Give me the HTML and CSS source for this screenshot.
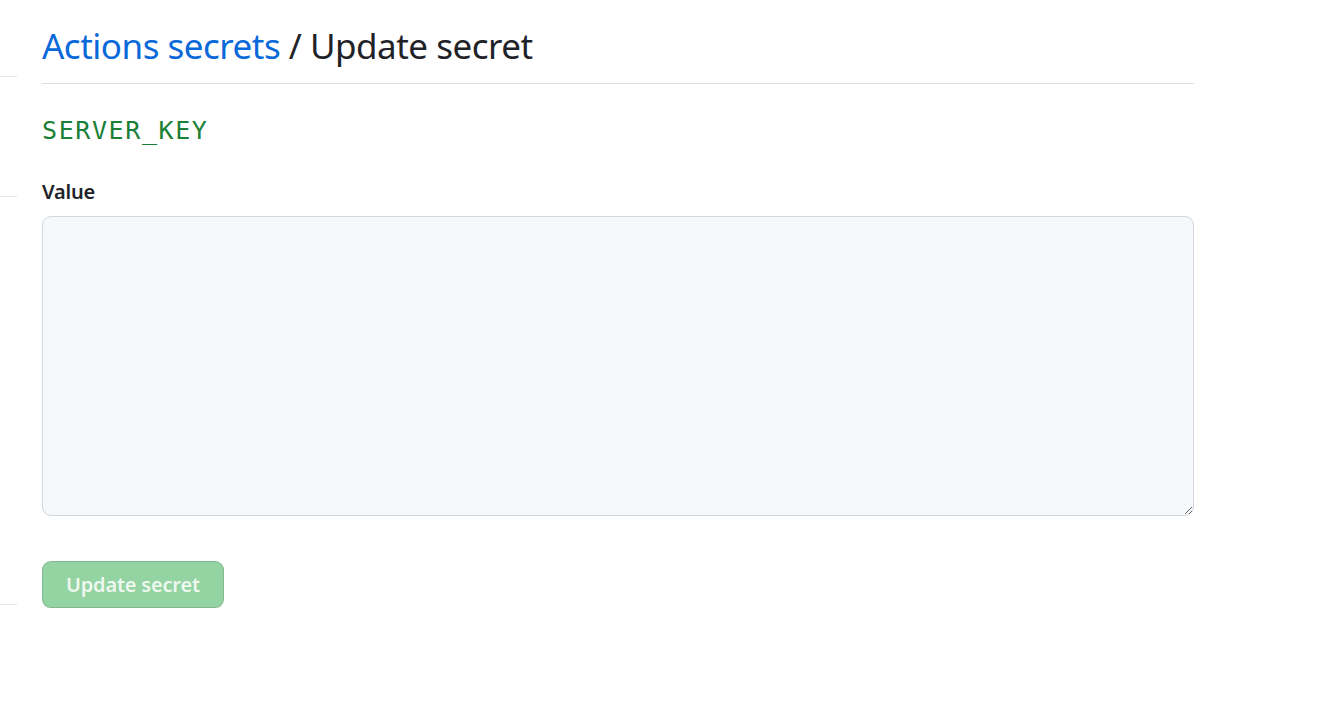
FILE: index.html
```html
<!DOCTYPE html>
<html lang="en">
<head>
<meta charset="utf-8">
<title>Update secret</title>
<link rel="stylesheet" href="styles.css">
</head>
<body>
<div class="layout">
  <nav class="sidebar">
    <div class="side-item side-a"></div>
    <div class="side-item side-b"></div>
    <div class="side-item side-c"></div>
  </nav>
  <main class="main">
    <div class="subhead">
      <h2 class="subhead-heading"><a class="crumb" href="#">Actions secrets</a> / Update secret</h2>
    </div>
    <h3 class="secret-name">SERVER_KEY</h3>
    <form class="form">
      <label class="label" for="secret_value">Value</label>
      <textarea class="textarea" id="secret_value"></textarea>
      <button type="button" class="btn-primary" disabled>Update secret</button>
    </form>
  </main>
</div>
</body>
</html>
```
FILE: styles.css
```css
* { box-sizing: border-box; }
html, body { margin: 0; padding: 0; background: #ffffff; }
body {
  font-family: "Noto Sans", "Open Sans", sans-serif;
  color: #1f2328;
}
.layout {
  display: flex;
  align-items: flex-start;
}
.sidebar {
  width: 17px;
  flex: none;
  display: flex;
  flex-direction: column;
}
.side-item { border-bottom: 1px solid #e6e9ec; }
.side-a { height: 77px; }
.side-b { height: 120px; }
.side-c { height: 408px; }
.main {
  width: 1152px;
  margin-left: 25px;
  flex: none;
}
.subhead {
  padding-top: 23px;
  padding-bottom: 15px;
  border-bottom: 1px solid #d8dee4;
}
.subhead-heading {
  margin: 0;
  font-size: 35px;
  line-height: 45px;
  font-weight: 400;
  letter-spacing: -0.5px;
  color: #1f2328;
}
.crumb { color: #0969da; text-decoration: none; }
.secret-name {
  margin: 32px 0 0;
  font-family: "DejaVu Sans Mono", "Liberation Mono", monospace;
  font-size: 25px;
  line-height: 30px;
  font-weight: 400;
  letter-spacing: 1.6px;
  color: #1a7f37;
}
.form {
  display: flex;
  flex-direction: column;
  align-items: flex-start;
  margin-top: 31px;
}
.label {
  font-size: 20px;
  line-height: 30px;
  font-weight: 600;
  letter-spacing: -0.2px;
  color: #1f2328;
  margin-bottom: 9px;
}
.textarea {
  width: 1152px;
  height: 300px;
  background: #f6f8fa;
  border: 1px solid #d0d7de;
  border-radius: 9px;
  margin: 0;
  padding: 12px;
  resize: vertical;
  font: inherit;
}
.btn-primary {
  margin-top: 45px;
  height: 47px;
  padding: 0 23px;
  font-family: inherit;
  font-size: 20px;
  font-weight: 600;
  letter-spacing: -0.2px;
  color: rgba(255, 255, 255, 0.85);
  background: #94d3a2;
  border: 1px solid rgba(31, 35, 40, 0.15);
  border-radius: 9px;
  box-shadow: 0 1px 0 rgba(31, 35, 40, 0.1);
}
```
